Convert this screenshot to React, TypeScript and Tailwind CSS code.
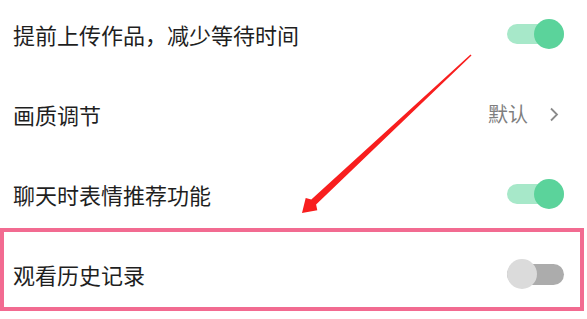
import React from "react";

type Row = { label: string; kind: "on" | "off" | "value"; value?: string };

const rows: Row[] = [
  { label: "提前上传作品，减少等待时间", kind: "on" },
  { label: "画质调节", kind: "value", value: "默认" },
  { label: "聊天时表情推荐功能", kind: "on" },
  { label: "观看历史记录", kind: "off" },
];

const Toggle = ({ on }: { on: boolean }) => (
  <div className="relative flex h-[30px] w-[57px] items-center">
    <div
      className={
        on
          ? "h-[20px] w-full rounded-full bg-[#a7e8c9]"
          : "h-[21px] w-full rounded-full bg-[#acacac]"
      }
    />
    <div
      className={
        on
          ? "absolute right-0 top-0 h-[30px] w-[30px] rounded-full bg-[#5bd39b]"
          : "absolute left-0 top-0 h-[30px] w-[30px] rounded-full bg-[#dbdbdb]"
      }
    />
  </div>
);

export default function App() {
  return (
    <div
      className="relative h-[319px] w-[587px] overflow-hidden bg-white"
      style={{ fontFamily: '"Noto Sans CJK SC", "Noto Sans", sans-serif' }}
    >
      <div className="mt-[-6px] flex flex-col">
        {rows.map((row) => (
          <div
            key={row.label}
            className="flex h-[80px] items-center justify-between pl-[13px] pr-[23px]"
          >
            <span className="text-[22px] leading-none text-[#1f1f1f]">{row.label}</span>
            {row.kind === "value" ? (
              <div className="flex items-center gap-[21px] pr-[5px]">
                <span className="text-[20px] leading-none text-[#7f7f7f]">{row.value}</span>
                <svg width="10" height="15" viewBox="0 0 10 15" fill="none">
                  <path d="M2 1.5 L8 7.5 L2 13.5" stroke="#8a8a8a" strokeWidth="1.8" />
                </svg>
              </div>
            ) : (
              <Toggle on={row.kind === "on"} />
            )}
          </div>
        ))}
      </div>

      {/* annotation: highlight box */}
      <div className="absolute left-0 top-[228px] h-[83px] w-[584px] border-4 border-[#f26b91]" />

      {/* annotation: arrow */}
      <svg className="absolute left-0 top-0" width="587" height="319" viewBox="0 0 587 319">
        <polygon
          points="302,213 317.3,210.3 316.1,204.6 471.5,55.6 470.5,54.4 311.3,199.4 305.7,197.9"
          fill="#f81e1e"
        />
      </svg>
    </div>
  );
}
